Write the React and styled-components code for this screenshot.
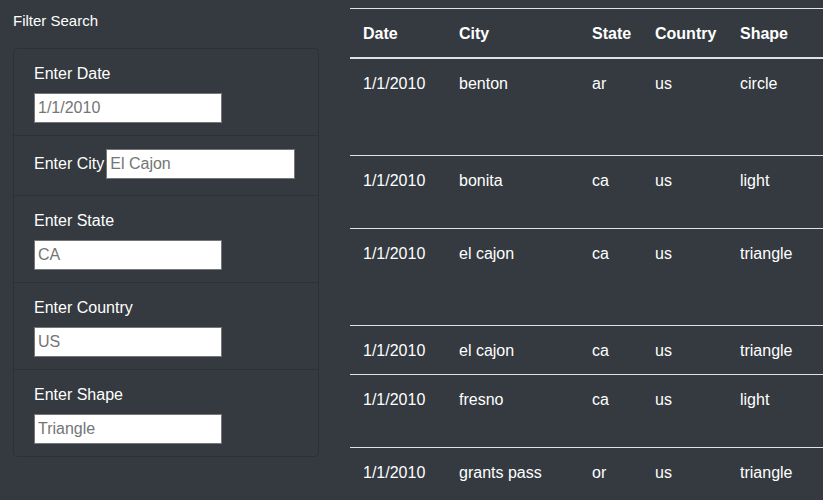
import React from "react";
import styled, { createGlobalStyle } from "styled-components";

const GlobalStyle = createGlobalStyle`
  html, body {
    margin: 0;
    padding: 0;
    background: #343a40;
    overflow: hidden;
  }
  body {
    font-family: "Liberation Sans", Arial, sans-serif;
    color: #fff;
  }
  * { box-sizing: border-box; }
`;

const Page = styled.div`
  display: flex;
  align-items: flex-start;
  width: 823px;
  height: 500px;
  overflow: hidden;
  background: #343a40;
`;

const Sidebar = styled.aside`
  flex: 0 0 auto;
  width: 350px;
  padding: 10px 31px 0 13px;
`;

const Title = styled.div`
  font-size: 15px;
  line-height: 22px;
  margin-bottom: 16px;
`;

const Card = styled.ul`
  list-style: none;
  margin: 0;
  padding: 0;
  width: 306px;
  border: 1px solid rgba(0, 0, 0, 0.14);
  border-radius: 4px;
`;

const Item = styled.li`
  display: ${(p) => (p.$inline ? "flex" : "block")};
  align-items: baseline;
  min-height: ${(p) => (p.$inline ? "60px" : "0")};
  padding: ${(p) => (p.$inline ? "13px 20px 11px" : "12px 20px")};
  border-bottom: 1px solid rgba(0, 0, 0, 0.14);
  font-size: 16px;
  line-height: 24px;
  &:last-child { border-bottom: none; }
`;

const Label = styled.label`
  display: block;
  padding-top: 1px;
  margin-bottom: ${(p) => (p.$inline ? "0" : "7px")};
  margin-right: ${(p) => (p.$inline ? "2px" : "0")};
  color: #fff;
`;

const Input = styled.input`
  display: block;
  width: ${(p) => (p.$inline ? "189px" : "188px")};
  height: 30px;
  padding: 0 3px;
  border: 1px solid #767676;
  border-radius: 0;
  background: #fff;
  font-family: "Liberation Sans", Arial, sans-serif;
  font-size: 16px;
  &::placeholder { color: #757575; }
`;

const TableWrap = styled.main`
  flex: 1 1 auto;
  min-width: 0;
  overflow: hidden;
  padding-top: 8px;
`;

const Table = styled.table`
  width: 620px;
  table-layout: fixed;
  border-collapse: collapse;
  font-size: 16px;
  line-height: 24px;
  color: #fff;
`;

const Th = styled.th`
  text-align: left;
  font-weight: 700;
  padding: 13px 12px 11px 13px;
  border-top: 1px solid #dee2e6;
  border-bottom: 2px solid #dee2e6;
  vertical-align: top;
`;

const Td = styled.td`
  padding: 13px 12px 11px 13px;
  border-bottom: 1px solid #dee2e6;
  vertical-align: top;
  height: ${(p) => p.$lines * 24 + 25}px;
`;

const columns = [
  { key: "date", label: "Date", width: 96 },
  { key: "city", label: "City", width: 133 },
  { key: "state", label: "State", width: 63 },
  { key: "country", label: "Country", width: 85 },
  { key: "shape", label: "Shape", width: 243 },
];

const rows = [
  { date: "1/1/2010", city: "benton", state: "ar", country: "us", shape: "circle", lines: 3 },
  { date: "1/1/2010", city: "bonita", state: "ca", country: "us", shape: "light", lines: 2 },
  { date: "1/1/2010", city: "el cajon", state: "ca", country: "us", shape: "triangle", lines: 3 },
  { date: "1/1/2010", city: "el cajon", state: "ca", country: "us", shape: "triangle", lines: 1 },
  { date: "1/1/2010", city: "fresno", state: "ca", country: "us", shape: "light", lines: 2 },
  { date: "1/1/2010", city: "grants pass", state: "or", country: "us", shape: "triangle", lines: 2 },
];

const filters = [
  { id: "date", label: "Enter Date", placeholder: "1/1/2010" },
  { id: "city", label: "Enter City", placeholder: "El Cajon", inline: true },
  { id: "state", label: "Enter State", placeholder: "CA" },
  { id: "country", label: "Enter Country", placeholder: "US" },
  { id: "shape", label: "Enter Shape", placeholder: "Triangle" },
];

export default function App() {
  return (
    <>
      <GlobalStyle />
      <Page>
        <Sidebar>
          <Title>Filter Search</Title>
          <Card>
            {filters.map((f) => (
              <Item key={f.id} $inline={f.inline}>
                <Label htmlFor={f.id} $inline={f.inline}>{f.label}</Label>
                <Input id={f.id} type="text" placeholder={f.placeholder} $inline={f.inline} />
              </Item>
            ))}
          </Card>
        </Sidebar>
        <TableWrap>
          <Table>
            <colgroup>
              {columns.map((c) => (
                <col key={c.key} style={{ width: c.width }} />
              ))}
            </colgroup>
            <thead>
              <tr>
                {columns.map((c) => (
                  <Th key={c.key}>{c.label}</Th>
                ))}
              </tr>
            </thead>
            <tbody>
              {rows.map((r, i) => (
                <tr key={i}>
                  {columns.map((c) => (
                    <Td key={c.key} $lines={r.lines}>{r[c.key]}</Td>
                  ))}
                </tr>
              ))}
            </tbody>
          </Table>
        </TableWrap>
      </Page>
    </>
  );
}
